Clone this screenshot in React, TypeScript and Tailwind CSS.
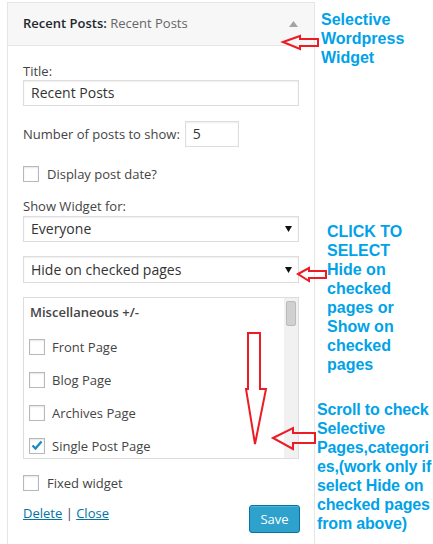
import React from "react";

const Checkbox = ({ checked = false }: { checked?: boolean }) => (
    <span className="flex items-center justify-center w-4 h-4 shrink-0 border border-[#b4b9be] bg-white shadow-[inset_0_1px_2px_rgba(0,0,0,0.1)]">
        {checked && (
            <svg width="12" height="11" viewBox="0 0 12 11">
                <path d="M1.5 5.5 L4.5 8.5 L10.5 1.5" fill="none" stroke="#1e8cbe" strokeWidth="2.4" />
            </svg>
        )}
    </span>
);

const SelectBox = ({ value, tall = false }: { value: string; tall?: boolean }) => (
    <div
        className={`flex items-center justify-between bg-white border border-[#ddd] shadow-[inset_0_1px_2px_rgba(0,0,0,0.07)] pl-[7px] pr-[6px] text-[14px] text-[#333] ${tall ? "h-[27px]" : "h-[26px]"}`}
    >
        <span>{value}</span>
        <svg width="7" height="6" viewBox="0 0 7 6">
            <path d="M0 0 H7 L3.5 6 Z" fill="#111" />
        </svg>
    </div>
);

const pages = [
    { label: "Front Page", checked: false },
    { label: "Blog Page", checked: false },
    { label: "Archives Page", checked: false },
    { label: "Single Post Page", checked: true },
];

const Note = ({ lines, className }: { lines: string[]; className: string }) => (
    <div className={`flex flex-col font-['Liberation_Sans',Arial,sans-serif] font-bold text-[16px] leading-[19px] text-[#00a2e8] whitespace-nowrap ${className}`}>
        {lines.map((l) => (
            <span key={l}>{l}</span>
        ))}
    </div>
);

export default function App() {
    return (
        <div className="relative flex w-[433px] h-[544px] overflow-hidden bg-white font-['Open_Sans',sans-serif] text-[13px] text-[#444]">
            {/* widget panel */}
            <div className="flex flex-col shrink-0 ml-[7px] mt-[2px] w-[308px] border border-b-0 border-[#e5e5e5] bg-white">
                <div className="flex items-center justify-between h-[43px] pl-[15px] pr-[16px] bg-[#f7f7f7] border-b border-[#e5e5e5]">
                    <span className="text-[13px]">
                        <span className="font-semibold text-[#23282d]">Recent Posts:</span>
                        <span className="text-[#666]"> Recent Posts</span>
                    </span>
                    <svg width="9" height="6" viewBox="0 0 9 6">
                        <path d="M0 6 L4.5 0 L9 6 Z" fill="#a0a5aa" />
                    </svg>
                </div>

                <div className="flex flex-col px-[15px] pt-[16px] leading-[18px]">
                    <label>Title:</label>
                    <div className="flex items-center h-[26px] pl-[7px] bg-white border border-[#ddd] shadow-[inset_0_1px_2px_rgba(0,0,0,0.07)] text-[14px] text-[#333]">
                        Recent Posts
                    </div>

                    <div className="flex items-center mt-[15px]">
                        <span>Number of posts to show:</span>
                        <div className="flex items-center ml-[5px] w-[54px] h-[26px] pl-[7px] bg-white border border-[#ddd] shadow-[inset_0_1px_2px_rgba(0,0,0,0.07)] text-[14px] text-[#333]">
                            5
                        </div>
                    </div>

                    <div className="flex items-center gap-[8px] mt-[18px]">
                        <Checkbox />
                        <span>Display post date?</span>
                    </div>

                    <label className="mt-[14px]">Show Widget for:</label>
                    <div className="mt-px">
                        <SelectBox value="Everyone" />
                    </div>
                    <div className="mt-[14px]">
                        <SelectBox value="Hide on checked pages" tall />
                    </div>

                    {/* scrolling page list */}
                    <div className="flex mt-[14px] h-[162px] border border-[#ddd] bg-white overflow-hidden">
                        <div className="flex flex-col flex-1 pt-[5px] overflow-hidden">
                            <span className="pl-[6px] font-semibold">Miscellaneous +/-</span>
                            <div className="flex flex-col mt-[9px]">
                                {pages.map((p) => (
                                    <div key={p.label} className="flex items-center gap-[7px] h-[33px] shrink-0 pl-[5px]">
                                        <Checkbox checked={p.checked} />
                                        <span>{p.label}</span>
                                    </div>
                                ))}
                            </div>
                        </div>
                        <div className="flex flex-col items-center w-[14px] pt-[3px] bg-[#f1f1f1]">
                            <div className="w-[10px] h-[25px] rounded-[2px] bg-[#d0d0d0] border border-[#bbb]" />
                        </div>
                    </div>

                    <div className="flex items-center gap-[8px] mt-[15px]">
                        <Checkbox />
                        <span>Fixed widget</span>
                    </div>

                    <div className="flex items-start justify-between mt-[12px]">
                        <span>
                            <a className="underline text-[#0074a2]">Delete</a>
                            <span className="text-[#444]"> | </span>
                            <a className="underline text-[#0074a2]">Close</a>
                        </span>
                        <button className="mt-px mr-[-1px] w-[51px] h-[28px] rounded-[3px] bg-[#2ea2cc] border border-[#0074a2] shadow-[inset_0_1px_0_rgba(120,200,230,0.5)] text-white text-[13px]">
                            Save
                        </button>
                    </div>
                </div>
            </div>

            {/* annotations */}
            <div className="flex flex-col">
                <Note lines={["Selective", "Wordpress", "Widget"]} className="mt-[10px] ml-[6px]" />
                <Note
                    lines={["CLICK TO", "SELECT", "Hide on", "checked", "pages or", "Show on", "checked", "pages"]}
                    className="mt-[155px] ml-[12px]"
                />
                <Note
                    lines={["Scroll to check", "Selective", "Pages,categori", "es,(work only if", "select Hide on", "checked pages", "from above)"]}
                    className="mt-[26px] ml-[2px] tracking-[-0.15px]"
                />
            </div>

            {/* hand-drawn red arrows */}
            <svg className="absolute inset-0 pointer-events-none" width="433" height="544" viewBox="0 0 433 544">
                <g fill="none" stroke="#ed1c24" strokeWidth="2">
                    <polygon points="283,42 300,36 300,39 318,39 318,46 300,46 300,49" />
                    <polygon points="298,274 309,268 309,271 326,271 326,278 309,278 309,281" />
                    <polygon points="248,333 260,333 260,389 266,389 255,444 246,389 248,389" />
                    <polygon points="273,438 293,428 293,433 315,433 315,443 293,443 293,449" />
                </g>
            </svg>
        </div>
    );
}
